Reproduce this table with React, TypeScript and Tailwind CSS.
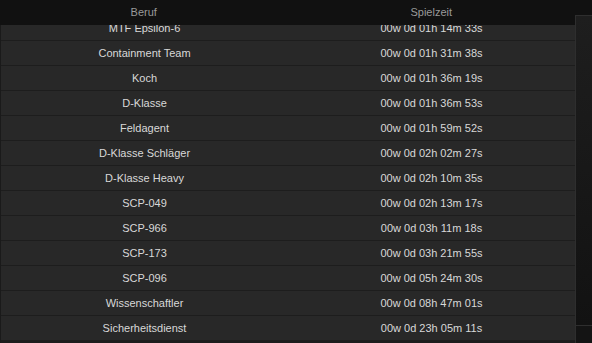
import React from "react";

const rows: [string, string][] = [
  ["MTF Epsilon-6", "00w 0d 01h 14m 33s"],
  ["Containment Team", "00w 0d 01h 31m 38s"],
  ["Koch", "00w 0d 01h 36m 19s"],
  ["D-Klasse", "00w 0d 01h 36m 53s"],
  ["Feldagent", "00w 0d 01h 59m 52s"],
  ["D-Klasse Schläger", "00w 0d 02h 02m 27s"],
  ["D-Klasse Heavy", "00w 0d 02h 10m 35s"],
  ["SCP-049", "00w 0d 02h 13m 17s"],
  ["SCP-966", "00w 0d 03h 11m 18s"],
  ["SCP-173", "00w 0d 03h 21m 55s"],
  ["SCP-096", "00w 0d 05h 24m 30s"],
  ["Wissenschaftler", "00w 0d 08h 47m 01s"],
  ["Sicherheitsdienst", "00w 0d 23h 05m 11s"],
];

export default function App() {
  return (
    <div
      className="w-[592px] h-[343px] bg-[#1c1c1c] flex overflow-hidden text-[11px]"
      style={{ fontFamily: '"Liberation Sans", Arial, sans-serif' }}
    >
      <div className="w-[575px] flex flex-col">
        <div className="h-[25px] shrink-0 bg-[#111111] grid grid-cols-2 text-[#9a9a9a]">
          <div className="flex items-center justify-center">Beruf</div>
          <div className="flex items-center justify-center">Spielzeit</div>
        </div>
        <div className="flex-1 overflow-hidden border-l border-[#1a1a1a]">
          <div className="-mt-[9px]">
            {rows.map(([a, b]) => (
              <div
                key={a}
                className="h-[25px] grid grid-cols-2 bg-[#282828] border-b border-[#1d1d1d] text-[#d8d8d8]"
              >
                <div className="flex items-center justify-center">{a}</div>
                <div className="flex items-center justify-center">{b}</div>
              </div>
            ))}
          </div>
        </div>
      </div>
      <div className="w-[17px] flex flex-col">
        <div className="h-[15px] shrink-0 bg-[#111111]" />
        <div className="h-[310px] shrink-0 bg-gradient-to-b from-[#1e1e1e] to-[#121212] border-t border-l border-[#2e2e2e]" />
        <div className="flex-1 bg-[#141414] border-t border-l border-[#2e2e2e]" />
      </div>
    </div>
  );
}
